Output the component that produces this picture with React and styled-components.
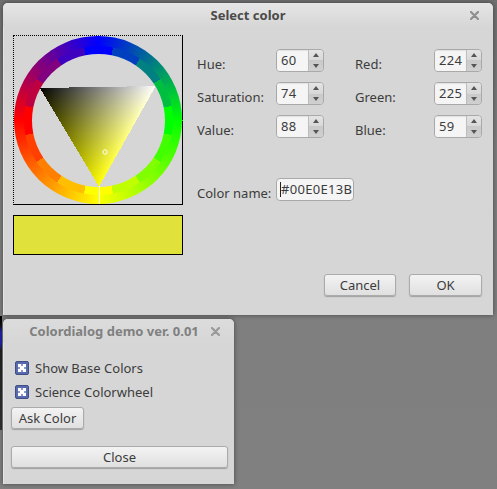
import React from "react";
import styled, { createGlobalStyle } from "styled-components";

const GlobalStyle = createGlobalStyle`
  html, body {
    margin: 0;
    height: 100%;
    background: #7c7c7c;
    font-family: "Noto Sans", "Open Sans", sans-serif;
    font-size: 13px;
    color: #3c3c3c;
  }
`;

const Desktop = styled.div`
  position: relative;
  width: 497px;
  height: 489px;
  overflow: hidden;
  background: linear-gradient(#6f6f6f, #7d7d7d 30%, #808080);
`;

const Sliver = styled.div`
  position: absolute;
  left: 0;
  top: 316px;
  width: 2px;
  height: 114px;
  background: linear-gradient(#000 0, #111 8%, #2222aa 14%, #2222aa 24%, #222 30%, #333 100%);
`;

const Window = styled.div`
  position: absolute;
  left: ${(p) => p.$left}px;
  top: ${(p) => p.$top}px;
  width: ${(p) => p.$width}px;
  height: ${(p) => p.$height}px;
  box-sizing: border-box;
  background: #d6d6d6;
  border-radius: 5px 5px 0 0;
  box-shadow: 0 0 5px rgba(0, 0, 0, 0.45), inset 1px 1px 0 rgba(255, 255, 255, 0.35);
  display: flex;
  flex-direction: column;
`;

const TitleBar = styled.div`
  height: 24px;
  flex: none;
  position: relative;
  display: flex;
  align-items: center;
  justify-content: center;
  box-sizing: border-box;
  padding-right: ${(p) => (p.$active ? 0 : 9)}px;
  border-radius: 5px 5px 0 0;
  background: ${(p) => (p.$active ? "linear-gradient(#e6e6e6, #d6d6d6)" : "linear-gradient(#dcdcdc, #d6d6d6)")};
  font-weight: 700;
  font-size: 13px;
  color: ${(p) => (p.$active ? "#4a4a4a" : "#808080")};
`;

const CloseMark = styled.svg`
  position: absolute;
  right: 14px;
  top: 8px;
  width: 9px;
  height: 9px;
`;

const DialogBody = styled.div`
  flex: 1;
  display: flex;
  padding: 8px 11px 0 10px;
  gap: 14px;
`;

const LeftColumn = styled.div`
  width: 170px;
  flex: none;
  display: flex;
  flex-direction: column;
  gap: 10px;
`;

const WheelFrame = styled.div`
  position: relative;
  width: 170px;
  height: 170px;
  box-sizing: border-box;
  border-top: 1px dotted #000;
  border-left: 1px dotted #000;
  border-right: 1px solid #000;
  border-bottom: 1px solid #000;
`;

const Band = styled.div`
  width: ${(p) => p.$size}px;
  height: ${(p) => p.$size}px;
  flex: none;
  border-radius: 50%;
  display: flex;
  align-items: center;
  justify-content: center;
  background: ${(p) => p.$fill};
`;

const WheelSvg = styled.svg`
  position: absolute;
  left: 0;
  top: 0;
  display: block;
  overflow: visible;
`;

const Swatch = styled.div`
  height: 40px;
  box-sizing: border-box;
  border: 1px solid #000;
  background: #e0e13b;
`;

const RightColumn = styled.div`
  flex: 1;
  display: flex;
  flex-direction: column;
  padding-top: 14px;
`;

const FieldGrid = styled.div`
  display: grid;
  grid-template-columns: 79px 48px 110px 48px;
  grid-auto-rows: 23px;
  row-gap: 10px;
`;

const FieldLabel = styled.div`
  padding-top: 6px;
  line-height: 18px;
  white-space: nowrap;
  margin-left: ${(p) => (p.$second ? 31 : 0)}px;
`;

const SpinBox = styled.div`
  display: flex;
  box-sizing: border-box;
  height: 23px;
  border: 1px solid #a9a9a9;
  border-radius: 4px;
  overflow: hidden;
`;

const SpinValue = styled.div`
  flex: 1;
  background: #f5f5f5;
  padding-left: 4px;
  line-height: 21px;
  letter-spacing: 0.3px;
  box-shadow: inset 0 1px 1px rgba(0, 0, 0, 0.08);
`;

const SpinButtons = styled.div`
  width: 14px;
  flex: none;
  display: flex;
  flex-direction: column;
  border-left: 1px solid #bdbdbd;
  background: linear-gradient(#e4e4e4, #d8d8d8 50%, #c9c9c9 50%, #d0d0d0);
`;

const SpinArrow = styled.div`
  flex: 1;
  display: flex;
  align-items: center;
  justify-content: center;
  &::before {
    content: "";
    width: 0;
    height: 0;
    border-left: 3px solid transparent;
    border-right: 3px solid transparent;
    ${(p) => (p.$down ? "border-top: 4px solid #555;" : "border-bottom: 4px solid #555;")}
  }
`;

const NameRow = styled.div`
  display: flex;
  margin-top: 40px;
  height: 23px;
`;

const NameLabel = styled(FieldLabel)`
  width: 79px;
`;

const NameField = styled.div`
  position: relative;
  width: 78px;
  height: 23px;
  box-sizing: border-box;
  border: 1px solid #a9a9a9;
  border-radius: 4px;
  background: #f5f5f5;
  overflow: hidden;
  padding-left: 4px;
  line-height: 21px;
  letter-spacing: 0.3px;
  white-space: nowrap;
`;

const Caret = styled.div`
  position: absolute;
  left: 3px;
  top: 3px;
  width: 1px;
  height: 15px;
  background: #222;
`;

const Footer = styled.div`
  display: flex;
  justify-content: flex-end;
  gap: 13px;
  padding: 0 11px 19px 0;
`;

const PushButton = styled.button`
  display: block;
  box-sizing: border-box;
  width: ${(p) => (p.$width ? `${p.$width}px` : "auto")};
  height: 22px;
  padding: 0;
  font: inherit;
  color: #3c3c3c;
  background: linear-gradient(#f3f3f3, #e0e0e0);
  border: 1px solid #ababab;
  border-radius: 3px;
  box-shadow: 0 1px 1px rgba(0, 0, 0, 0.25);
`;

const DemoBody = styled.div`
  display: flex;
  flex-direction: column;
  padding: 13px 6px 0 8px;
`;

const CheckRow = styled.div`
  display: flex;
  align-items: center;
  gap: 6px;
  height: 24px;
  padding-left: 4px;
  line-height: 16px;
`;

const CheckBox = styled.div`
  width: 14px;
  height: 14px;
  box-sizing: border-box;
  border: 1px solid #3f4d88;
  border-radius: 2px;
  background: #5869ad;
  display: flex;
  align-items: center;
  justify-content: center;
`;

const AskRow = styled.div`
  margin-top: 3px;
  margin-bottom: 17px;
`;

const lerp = (a, b, t) => a.map((v, i) => v + (b[i] - v) * t);
const css = (c) => `rgb(${c.map(Math.round).join(",")})`;

// clockwise from the top of the wheel
const PRIMARIES = [
  [0, 0, 255],
  [0, 255, 0],
  [255, 255, 0],
  [255, 0, 0],
];

function wheelColor(angle) {
  const a = ((angle % 360) + 360) % 360;
  const i = Math.floor(a / 90);
  return lerp(PRIMARIES[i], PRIMARIES[(i + 1) % 4], (a - i * 90) / 90);
}

const SMOOTH_BAND = `conic-gradient(rgb(0,0,255), rgb(0,255,0), rgb(255,255,0), rgb(255,0,0), rgb(0,0,255))`;

// 16 flat sectors, each centred on its own colour
const STEPPED_BAND = (() => {
  const step = 22.5;
  const stops = Array.from({ length: 16 }, (_, i) => {
    const c = css(wheelColor(i * step));
    return `${c} ${i * step - step / 2}deg ${i * step + step / 2}deg`;
  });
  return `conic-gradient(from 0deg, ${stops.join(", ")}, rgb(0,0,255) 348.75deg 360deg)`;
})();

const BLACK = { x: 40, y: 88, c: [0, 0, 0] };
const WHITE = { x: 155.7, y: 86, c: [255, 255, 255] };
const HUE = { x: 99, y: 186.7, c: [255, 255, 0] };

function triangleRows() {
  const edges = [
    [BLACK, WHITE],
    [WHITE, HUE],
    [HUE, BLACK],
  ];
  const rows = [];
  for (let y = 86; y < 187; y++) {
    const sy = y + 0.5;
    const hits = [];
    edges.forEach(([p, q]) => {
      const lo = Math.min(p.y, q.y);
      const hi = Math.max(p.y, q.y);
      if (sy < lo || sy > hi) return;
      const t = (sy - p.y) / (q.y - p.y);
      hits.push({ x: p.x + (q.x - p.x) * t, c: lerp(p.c, q.c, t) });
    });
    if (hits.length < 2) continue;
    hits.sort((a, b) => a.x - b.x);
    rows.push({ y, left: hits[0], right: hits[hits.length - 1] });
  }
  return rows;
}

function ColorWheel() {
  const rows = triangleRows();
  return (
    <>
      <Band $size={168} $fill={SMOOTH_BAND}>
        <Band $size={149} $fill={STEPPED_BAND}>
          <Band $size={133} $fill="#d6d6d6" />
        </Band>
      </Band>
      <WheelSvg width="168" height="168" viewBox="14 36 168 168">
        <defs>
          {rows.map((r) => (
            <linearGradient key={r.y} id={`row${r.y}`} gradientUnits="userSpaceOnUse" x1={r.left.x} x2={r.right.x} y1="0" y2="0">
              <stop offset="0" stopColor={css(r.left.c)} />
              <stop offset="1" stopColor={css(r.right.c)} />
            </linearGradient>
          ))}
        </defs>
        <g shapeRendering="crispEdges">
          {rows.map((r) => (
            <rect
              key={r.y}
              x={Math.round(r.left.x)}
              y={r.y}
              width={Math.max(1, Math.round(r.right.x) - Math.round(r.left.x))}
              height="1"
              fill={`url(#row${r.y})`}
            />
          ))}
          <rect x="99" y="186" width="1" height="18" fill="#fff" />
          <rect x="98" y="35" width="1" height="2" fill="#0000ff" />
          <rect x="182" y="120" width="1" height="1" fill="#00ff00" />
          <rect x="14" y="120" width="1" height="1" fill="#ff0000" />
        </g>
        <circle cx="105" cy="152" r="2.2" fill="none" stroke="#fff" strokeWidth="1" />
      </WheelSvg>
    </>
  );
}

function CloseIcon({ color }) {
  return (
    <CloseMark viewBox="0 0 9 9">
      <path d="M1 1 L8 8 M8 1 L1 8" stroke={color} strokeWidth="2.2" strokeLinecap="round" fill="none" />
    </CloseMark>
  );
}

function Spin({ value }) {
  return (
    <SpinBox>
      <SpinValue>{value}</SpinValue>
      <SpinButtons>
        <SpinArrow />
        <SpinArrow $down />
      </SpinButtons>
    </SpinBox>
  );
}

function Check({ label }) {
  return (
    <CheckRow>
      <CheckBox>
        <svg width="10" height="10" viewBox="0 0 10 10" shapeRendering="crispEdges">
          <rect x="1" y="1" width="8" height="8" fill="#fff" />
          <path d="M4 1 H6 V3 H4 Z M4 7 H6 V9 H4 Z M1 4 H3 V6 H1 Z M7 4 H9 V6 H7 Z" fill="#8f9bcb" />
        </svg>
      </CheckBox>
      {label}
    </CheckRow>
  );
}

const FIELDS = [
  ["Hue:", 60, "Red:", 224],
  ["Saturation:", 74, "Green:", 225],
  ["Value:", 88, "Blue:", 59],
];

export default function App() {
  return (
    <Desktop>
      <GlobalStyle />
      <Sliver />
      <Window $left={3} $top={3} $width={490} $height={312}>
        <TitleBar $active>
          Select color
          <CloseIcon color="#8f8f8f" />
        </TitleBar>
        <DialogBody>
          <LeftColumn>
            <WheelFrame>
              <ColorWheel />
            </WheelFrame>
            <Swatch />
          </LeftColumn>
          <RightColumn>
            <FieldGrid>
              {FIELDS.map(([l1, v1, l2, v2]) => (
                <React.Fragment key={l1}>
                  <FieldLabel>{l1}</FieldLabel>
                  <Spin value={v1} />
                  <FieldLabel $second>{l2}</FieldLabel>
                  <Spin value={v2} />
                </React.Fragment>
              ))}
            </FieldGrid>
            <NameRow>
              <NameLabel>Color name:</NameLabel>
              <NameField>
                <Caret />
                #00E0E13B
              </NameField>
            </NameRow>
          </RightColumn>
        </DialogBody>
        <Footer>
          <PushButton $width={72}>Cancel</PushButton>
          <PushButton $width={73}>OK</PushButton>
        </Footer>
      </Window>
      <Window $left={3} $top={319} $width={231} $height={165}>
        <TitleBar>
          Colordialog demo ver. 0.01
          <CloseIcon color="#9a9a9a" />
        </TitleBar>
        <DemoBody>
          <Check label="Show Base Colors" />
          <Check label="Science Colorwheel" />
          <AskRow>
            <PushButton $width={73}>Ask Color</PushButton>
          </AskRow>
          <PushButton>Close</PushButton>
        </DemoBody>
      </Window>
    </Desktop>
  );
}
